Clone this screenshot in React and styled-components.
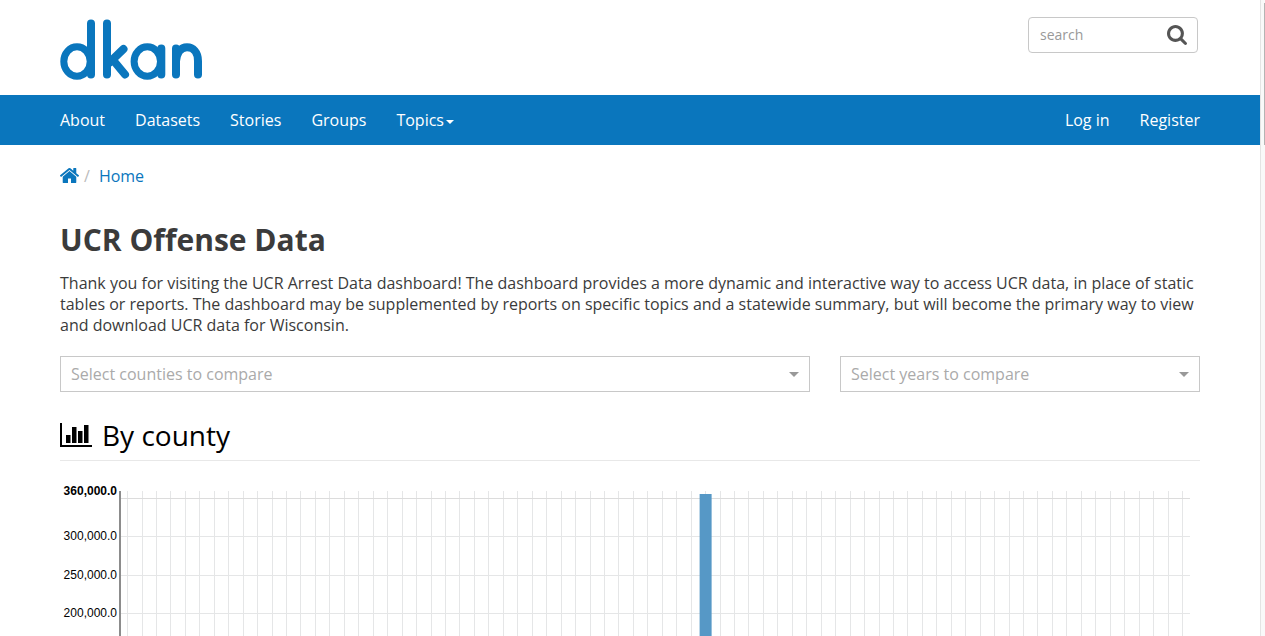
import React from "react";
import styled, { createGlobalStyle } from "styled-components";

const GlobalStyle = createGlobalStyle`
  *, *::before, *::after { box-sizing: border-box; }
  body {
    margin: 0;
    background: #fff;
    color: #3b3b3b;
    font: 16px/21px "Open Sans", sans-serif;
  }
`;

const BLUE = "#0a76bd";

const Shell = styled.div`
  display: flex;
  height: 100vh;
  overflow: hidden;
`;

const Page = styled.div`
  flex: 1;
  min-width: 0;
`;

const ScrollTrack = styled.div`
  flex: none;
  width: 5px;
  border-left: 1px solid #e4e4e4;
  background: #f9f9f9;
`;

const ScrollThumb = styled.div`
  height: 142px;
  margin: 3px 0 0 3px;
  background: #b4b4b4;
`;

const Container = styled.div`
  max-width: 1170px;
  margin: 0 auto;
  padding: 0 15px;
`;

const HeaderRow = styled(Container)`
  display: flex;
  justify-content: space-between;
  align-items: flex-start;
  height: 95px;
  padding-top: 17px;
`;

const LogoLink = styled.a`
  display: block;
  padding-top: 2px;
  svg { display: block; }
`;

const SearchForm = styled.form`
  display: flex;
  align-items: center;
  width: 170px;
  height: 36px;
  margin-right: 2px;
  padding: 0 10px 0 11px;
  border: 1px solid #c8c8c8;
  border-radius: 4px;
`;

const SearchInput = styled.input`
  flex: 1;
  min-width: 0;
  padding: 0;
  border: 0;
  outline: 0;
  background: transparent;
  color: #555;
  font: 14px/22px "Open Sans", sans-serif;
  &::placeholder { color: #999; opacity: 1; }
`;

const SearchButton = styled.button`
  display: flex;
  padding: 0;
  border: 0;
  background: none;
  color: #555;
  cursor: pointer;
`;

const NavBar = styled.nav`
  background: ${BLUE};
`;

const NavRow = styled(Container)`
  display: flex;
  justify-content: space-between;
`;

const NavList = styled.ul`
  display: flex;
  gap: 30px;
  margin: 0;
  padding: 0;
  list-style: none;
`;

const NavLink = styled.a`
  display: flex;
  align-items: center;
  gap: 2px;
  height: 50px;
  color: #fff;
  text-decoration: none;
`;

const Caret = styled.span`
  border: solid transparent;
  border-width: ${(p) => p.$size}px ${(p) => p.$size}px 0;
  border-top-color: ${(p) => p.$color};
`;

const NavCaret = styled(Caret)`
  margin-top: 4px;
`;

const Breadcrumb = styled.nav`
  display: flex;
  align-items: center;
  padding-top: 21px;
  a { color: ${BLUE}; text-decoration: none; }
  svg { display: block; }
`;

const Divider = styled.span`
  padding: 0 9px 0 5px;
  color: #bbb;
`;

const Title = styled.h1`
  margin: 32px 0 12px;
  font-size: 30px;
  line-height: 42px;
  font-weight: 700;
`;

const Intro = styled.p`
  margin: 0 0 20px;
`;

const Filters = styled.div`
  display: grid;
  grid-template-columns: minmax(0, 25fr) minmax(0, 12fr);
  gap: 30px;
`;

const SelectBox = styled.div`
  position: relative;
`;

const Select = styled.select`
  display: block;
  width: 100%;
  height: 36px;
  padding: 0 30px 0 10px;
  border: 1px solid #c8c8c8;
  border-radius: 0;
  background: #fff;
  color: #aaa;
  font: 16px/21px "Open Sans", sans-serif;
  appearance: none;
`;

const SelectCaret = styled(Caret)`
  position: absolute;
  right: 11px;
  top: 16px;
  pointer-events: none;
`;

const SectionTitle = styled.h2`
  display: flex;
  align-items: center;
  gap: 10px;
  margin: 23px 0 30px;
  padding-bottom: 5px;
  border-bottom: 1px solid #e8e8e8;
  color: #000;
  font-size: 28px;
  line-height: 40px;
  font-weight: 400;
`;

const ChartRow = styled.div`
  display: flex;
  padding-right: 10px;
`;

const AxisLabels = styled.svg`
  flex: none;
  width: 59px;
  height: 280px;
  overflow: visible;
  font: 12px "Liberation Sans", Arial, sans-serif;
`;

const Plot = styled.svg`
  flex: 1;
  min-width: 0;
  height: 280px;
`;

const Logo = () => (
  <svg width="143" height="61" viewBox="0 0 143 61" fill="none" stroke={BLUE} strokeWidth="8" strokeLinecap="round" role="img" aria-label="dkan">
    <ellipse cx="17" cy="42.5" rx="13.2" ry="14.7" strokeWidth="7" />
    <path d="M31 4.500V55.500M47 4.500V55.500M63.500 30L49 44M53 41L65 55.500" />
    <ellipse cx="87.300" cy="42.500" rx="13.200" ry="14.700" strokeWidth="7" />
    <path d="M101.300 29.500V55.500M116 29.500V55.500M116 42C117 33 121 28.300 127 28.300S138 33 138 42V55.500" />
  </svg>
);

const SearchIcon = () => (
  <svg width="20" height="20" viewBox="64 128 1664 1664" fill="currentColor" aria-hidden="true">
    <path d="M1216 832q0-185-131.500-316.500t-316.500-131.500-316.500 131.500-131.500 316.500 131.500 316.500 316.500 131.500 316.500-131.500 131.500-316.500zm512 832q0 52-38 90t-90 38q-54 0-90-38l-343-342q-179 124-399 124-143 0-273.500-55.500t-225-150-150-225-55.500-273.500 55.500-273.500 150-225 225-150 273.500-55.500 273.500 55.500 225 150 150 225 55.500 273.500q0 220-124 399l343 343q37 37 37 90z" />
  </svg>
);

const HomeIcon = () => (
  <svg width="19" height="18" viewBox="89 253 1614 1529" fill="currentColor" aria-hidden="true">
    <path d="M1472 992v480q0 26-19 45t-45 19h-384v-384h-256v384h-384q-26 0-45-19t-19-45v-480q0-1 .5-3t.5-3l575-474 575 474q1 2 1 6zm223-69l-62 74q-8 9-21 11h-3q-13 0-21-7l-692-577-692 577q-12 8-24 7-13-2-21-11l-62-74q-8-10-7-23.500t11-21.500l719-599q32-26 76-26t76 26l244 204v-195q0-14 9-23t23-9h192q14 0 23 9t9 23v408l219 182q10 8 11 21.500t-7 23.500z" />
  </svg>
);

const ChartIcon = () => (
  <svg width="32" height="24" viewBox="0 0 32 24" aria-hidden="true">
    <path d="M0 0H2V22H32V24H0ZM6 12H10.500V20H6ZM12 4H16.500V20H12ZM18 8H22.500V20H18ZM24 2H28.500V20H24Z" />
  </svg>
);

const counties = 74;
const peakCounty = 40;
const ticks = [
  { label: "300,000.0", y: 45 },
  { label: "250,000.0", y: 84 },
  { label: "200,000.0", y: 122 },
];

const countyX = (i) => `${0.8 + (i * 98.5) / (counties - 1)}%`;

const CountyChart = () => (
  <ChartRow>
    <AxisLabels>
      <text x="57" y="4" textAnchor="end" fontWeight="700">360,000.0</text>
      {ticks.map((t) => (
        <text key={t.label} x="57" y={t.y + 4} textAnchor="end">{t.label}</text>
      ))}
    </AxisLabels>
    <Plot role="img" aria-label="Offenses by county">
      <g stroke="#e5e6e7" shapeRendering="crispEdges">
        {Array.from({ length: counties }, (_, i) => (
          <line key={i} x1={countyX(i)} x2={countyX(i)} y1="0" y2="274" />
        ))}
        <line x1="0" x2="100%" y1="7.5" y2="7.5" stroke="#dcdcdc" />
        {ticks.map((t) => (
          <line key={t.label} x1="0" x2="100%" y1={t.y + 0.5} y2={t.y + 0.5} />
        ))}
      </g>
      <rect x="0" y="0" width="2" height="274" fill="#8c8c8c" />
      <svg x={countyX(peakCounty)} overflow="visible">
        <rect x="-6" y="3" width="12" height="271" fill="#5698c6" />
      </svg>
    </Plot>
  </ChartRow>
);

export default function App() {
  return (
    <Shell>
      <GlobalStyle />
      <Page>
        <header>
          <HeaderRow>
            <LogoLink href="#"><Logo /></LogoLink>
            <SearchForm role="search">
              <SearchInput type="text" placeholder="search" aria-label="Search" />
              <SearchButton type="button" aria-label="Submit search"><SearchIcon /></SearchButton>
            </SearchForm>
          </HeaderRow>
          <NavBar>
            <NavRow>
              <NavList>
                {["About", "Datasets", "Stories", "Groups"].map((n) => (
                  <li key={n}><NavLink href="#">{n}</NavLink></li>
                ))}
                <li><NavLink href="#">Topics<NavCaret $size={4} $color="#fff" /></NavLink></li>
              </NavList>
              <NavList>
                <li><NavLink href="#">Log in</NavLink></li>
                <li><NavLink href="#">Register</NavLink></li>
              </NavList>
            </NavRow>
          </NavBar>
        </header>
        <Container as="main">
          <Breadcrumb aria-label="Breadcrumb">
            <a href="#" aria-label="Front page"><HomeIcon /></a>
            <Divider>/</Divider>
            <a href="#">Home</a>
          </Breadcrumb>
          <Title>UCR Offense Data</Title>
          <Intro>
            Thank you for visiting the UCR Arrest Data dashboard! The dashboard provides a more dynamic and
            interactive way to access UCR data, in place of static tables or reports. The dashboard may be
            supplemented by reports on specific topics and a statewide summary, but will become the primary way
            to view and download UCR data for Wisconsin.
          </Intro>
          <Filters>
            <SelectBox>
              <Select aria-label="Counties"><option>Select counties to compare</option></Select>
              <SelectCaret $size={5} $color="#999" />
            </SelectBox>
            <SelectBox>
              <Select aria-label="Years"><option>Select years to compare</option></Select>
              <SelectCaret $size={5} $color="#999" />
            </SelectBox>
          </Filters>
          <SectionTitle><ChartIcon />By county</SectionTitle>
          <CountyChart />
        </Container>
      </Page>
      <ScrollTrack aria-hidden="true"><ScrollThumb /></ScrollTrack>
    </Shell>
  );
}
